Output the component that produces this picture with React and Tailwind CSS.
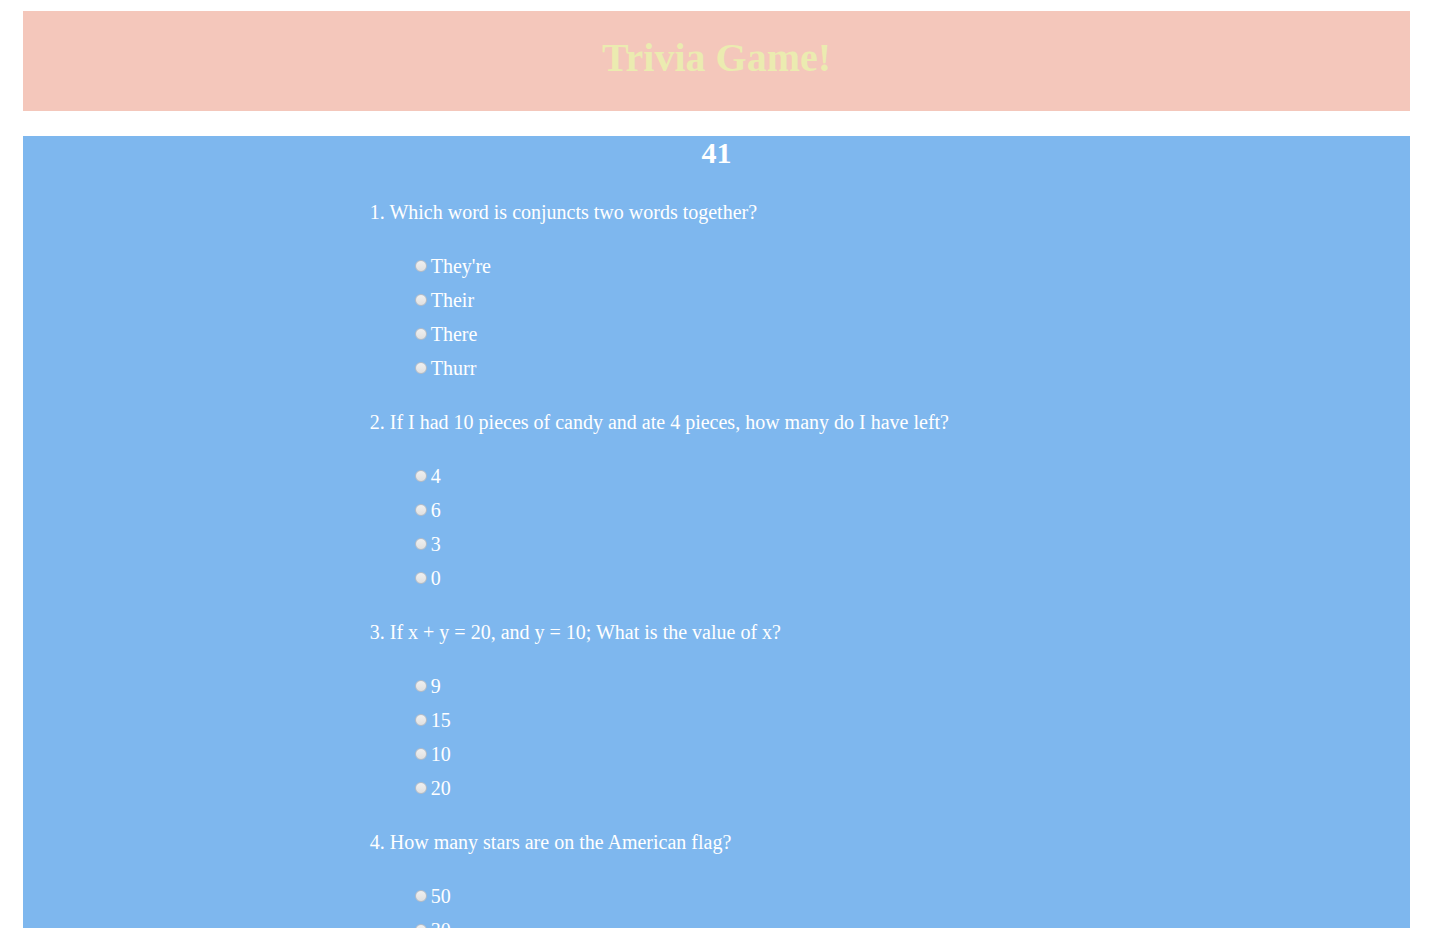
import { useState } from "react";

const questions = [
  {
    text: "Which word is conjuncts two words together?",
    options: ["They're", "Their", "There", "Thurr"],
  },
  {
    text: "If I had 10 pieces of candy and ate 4 pieces, how many do I have left?",
    options: ["4", "6", "3", "0"],
  },
  {
    text: "If x + y = 20, and y = 10; What is the value of x?",
    options: ["9", "15", "10", "20"],
  },
  {
    text: "How many stars are on the American flag?",
    options: ["50", "30"],
  },
];

function Question({ number, question, answer, onAnswer }) {
  return (
    <fieldset>
      <legend className="mb-5 leading-[34px]">
        {number}. {question.text}
      </legend>
      <div className="flex flex-col pl-[45px]">
        {question.options.map((option) => (
          <label key={option} className="flex items-center gap-1 self-start leading-[34px]">
            <input
              type="radio"
              name={`question-${number}`}
              value={option}
              checked={answer === option}
              onChange={() => onAnswer(option)}
              className="size-3 appearance-none rounded-full border border-[#b4bcc6] bg-linear-to-b from-[#f0f0f0] to-[#e0e0e0] checked:bg-[#555555] checked:bg-none"
            />
            {option}
          </label>
        ))}
      </div>
    </fieldset>
  );
}

export default function App() {
  const [answers, setAnswers] = useState({});

  return (
    <div className="flex flex-col gap-[25px] bg-white pt-[11px] pr-[22px] pl-[23px] font-['Liberation_Serif',serif]">
      <header className="bg-[#f4c7bb] pt-6 pb-[30px] text-center">
        <h1 className="text-[40px] leading-[46px] font-bold text-[#ebebb0]">Trivia Game!</h1>
      </header>
      <main className="bg-[#7eb7ee] pb-5 text-xl text-white">
        <h2 className="pb-[25px] text-center text-3xl leading-[34px] font-bold">41</h2>
        <form className="flex flex-col gap-5 pl-[25%]">
          {questions.map((question, index) => (
            <Question
              key={question.text}
              number={index + 1}
              question={question}
              answer={answers[index]}
              onAnswer={(option) => setAnswers({ ...answers, [index]: option })}
            />
          ))}
        </form>
      </main>
    </div>
  );
}
